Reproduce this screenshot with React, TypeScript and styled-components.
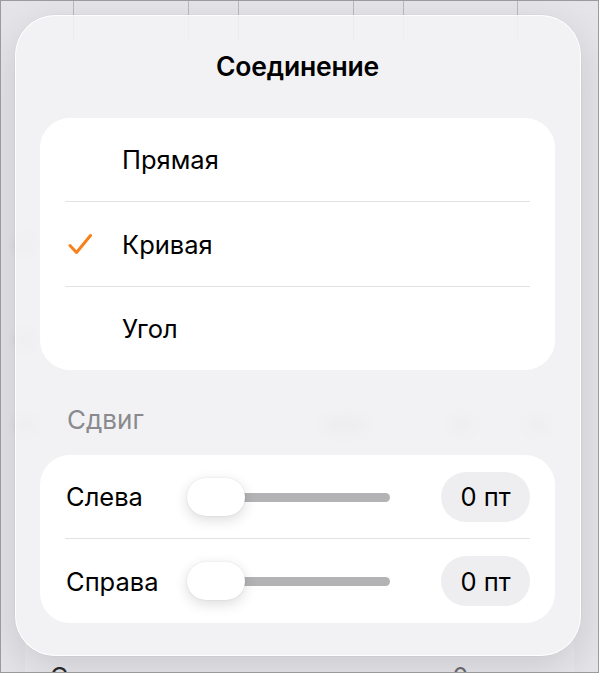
import React from 'react'
import styled, { createGlobalStyle } from 'styled-components'

const GlobalStyle = createGlobalStyle`
  html, body {
    margin: 0;
    padding: 0;
  }
  body {
    font-family: Inter, "Noto Sans", "Liberation Sans", sans-serif;
    -webkit-font-smoothing: antialiased;
    color: #000;
  }
`

const Screen = styled.div`
  position: relative;
  width: 599px;
  height: 673px;
  box-sizing: border-box;
  border: 1px solid #9b9b9f;
  background: #e4e4e9;
  overflow: hidden;
`

/* spreadsheet underneath the popover */
const Sheet = styled.div`
  display: flex;
  flex-direction: column;
  height: 100%;
`

const ColumnHeader = styled.div`
  flex: none;
  display: grid;
  grid-template-columns: 73px 115px 50px 115px 50px 114px 1fr;
  height: 40px;
`

const ColumnCell = styled.div`
  border-right: 1px solid #b9b9be;

  &:last-child {
    border-right: none;
  }
`

const SheetRow = styled.div<{ $gap: number }>`
  flex: none;
  display: flex;
  align-items: center;
  height: 14px;
  margin-top: ${({ $gap }) => $gap}px;
`

const Smudge = styled.span<{ $x: number; $w: number }>`
  flex: none;
  width: ${({ $w }) => $w}px;
  height: 12px;
  margin-left: ${({ $x }) => $x}px;
  border-radius: 6px;
  background: #6f6f75;
  filter: blur(6px);
  opacity: 0.45;
`

const ListCell = styled.div`
  flex: none;
  margin: auto 24px 0;
  height: 100px;
  box-sizing: border-box;
  padding: 90px 26px 0 25px;
  display: flex;
  align-items: flex-start;
  background: #e9e9ed;
  font-size: 25px;
  line-height: 30px;
  color: #2a2a2c;
`

const ListValue = styled.span`
  margin-left: auto;
  color: #6b6b70;
`

const ListChevron = styled.span`
  margin-left: 70px;
  color: #b4b4b9;
`

/* popover */
const Popover = styled.div`
  position: absolute;
  left: 14px;
  top: 14px;
  width: 566px;
  height: 641px;
  box-sizing: border-box;
  padding: 0 25px 0 24px;
  display: flex;
  flex-direction: column;
  border-radius: 40px;
  border: 1px solid rgba(255, 255, 255, 0.95);
  background: rgba(243, 243, 245, 0.9);
  box-shadow: 0 14px 40px rgba(0, 0, 0, 0.13), 0 0 0 0.5px rgba(0, 0, 0, 0.05);
`

const Title = styled.div`
  padding-top: 33px;
  margin-bottom: 35px;
  font-size: 26.5px;
  line-height: 34px;
  font-weight: 600;
  text-align: center;
  letter-spacing: -0.2px;
`

const Card = styled.div`
  background: #fff;
  border-radius: 30px;
  overflow: hidden;
`

const Divider = styled.div<{ $inset: number }>`
  height: 1px;
  margin: 0 ${({ $inset }) => $inset}px;
  background: #e2e2e5;
`

const OptionRow = styled.div<{ $h: number }>`
  display: grid;
  grid-template-columns: 82px 1fr;
  align-items: center;
  height: ${({ $h }) => $h}px;
  font-size: 25.5px;
`

const CheckCell = styled.div`
  display: flex;
  align-items: center;
  padding-left: 28px;
`

const SectionLabel = styled.div`
  padding: 36px 0 21px 27px;
  font-size: 26px;
  line-height: 28px;
  color: #8a8a8e;
`

const SliderRow = styled.div<{ $h: number }>`
  display: flex;
  align-items: center;
  height: ${({ $h }) => $h}px;
  padding: 0 25px 0 26px;
  font-size: 25.5px;
`

const SliderLabel = styled.span`
  flex: none;
  width: 121px;
`

const Slider = styled.div`
  position: relative;
  flex: none;
  width: 203px;
  height: 38px;
`

const Track = styled.div`
  position: absolute;
  left: 12px;
  right: 0;
  top: 15px;
  height: 9px;
  border-radius: 4.5px;
  background: #b3b3b6;
`

const Thumb = styled.div`
  position: absolute;
  left: 0;
  top: 0;
  width: 58px;
  height: 38px;
  border-radius: 19px;
  background: #fff;
  box-shadow: 0 4px 14px rgba(0, 0, 0, 0.14), 0 0 2px rgba(0, 0, 0, 0.1);
`

const ValuePill = styled.div`
  margin-left: auto;
  width: 89px;
  height: 50px;
  border-radius: 25px;
  display: flex;
  align-items: center;
  justify-content: center;
  background: #eeeef0;
  font-size: 25.5px;
`

const OPTIONS = [
  { label: 'Прямая', h: 83 },
  { label: 'Кривая', h: 84, checked: true },
  { label: 'Угол', h: 83 },
]

const OFFSETS = [
  { label: 'Слева', h: 83 },
  { label: 'Справа', h: 84 },
]

function Check() {
  return (
    <svg width="24" height="22" viewBox="0 0 24 22">
      <polyline
        points="2,12.5 8.5,19.5 22.5,2.5"
        fill="none"
        stroke="#f7821b"
        strokeWidth="3"
        strokeLinecap="round"
        strokeLinejoin="round"
      />
    </svg>
  )
}

export default function App() {
  return (
    <>
      <GlobalStyle />
      <Screen>
        <Sheet>
          <ColumnHeader>
            {Array.from({ length: 7 }).map((_, i) => (
              <ColumnCell key={i} />
            ))}
          </ColumnHeader>
          <SheetRow $gap={197}>
            <Smudge $x={18} $w={12} />
          </SheetRow>
          <SheetRow $gap={81}>
            <Smudge $x={18} $w={12} />
          </SheetRow>
          <SheetRow $gap={71}>
            <Smudge $x={18} $w={14} />
            <Smudge $x={292} $w={40} />
            <Smudge $x={88} $w={18} />
            <Smudge $x={58} $w={16} />
          </SheetRow>
          <ListCell>
            Соединение
            <ListValue>0</ListValue>
            <ListChevron>›</ListChevron>
          </ListCell>
        </Sheet>

        <Popover>
          <Title>Соединение</Title>

          <Card>
            {OPTIONS.map(({ label, h, checked }, idx) => (
              <React.Fragment key={label}>
                {idx > 0 && <Divider $inset={25} />}
                <OptionRow $h={h}>
                  <CheckCell>{checked && <Check />}</CheckCell>
                  <span>{label}</span>
                </OptionRow>
              </React.Fragment>
            ))}
          </Card>

          <SectionLabel>Сдвиг</SectionLabel>

          <Card>
            {OFFSETS.map(({ label, h }, idx) => (
              <React.Fragment key={label}>
                {idx > 0 && <Divider $inset={25} />}
                <SliderRow $h={h}>
                  <SliderLabel>{label}</SliderLabel>
                  <Slider>
                    <Track />
                    <Thumb />
                  </Slider>
                  <ValuePill>0 пт</ValuePill>
                </SliderRow>
              </React.Fragment>
            ))}
          </Card>
        </Popover>
      </Screen>
    </>
  )
}
